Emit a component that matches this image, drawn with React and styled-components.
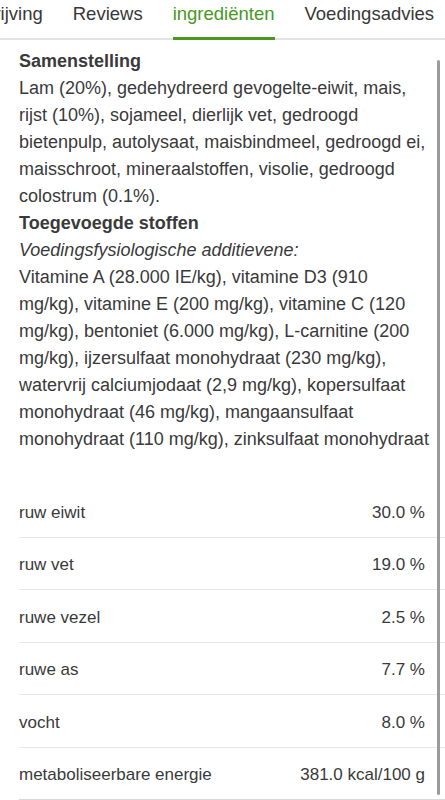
import React from "react";
import styled, { createGlobalStyle } from "styled-components";

const Global = createGlobalStyle`
  html, body { margin: 0; padding: 0; background: #fff; }
  body { font-family: "Liberation Sans", Arial, Helvetica, sans-serif; color: #3a3a3a; -webkit-font-smoothing: antialiased; }
`;

const Page = styled.div`
  position: relative;
  width: 445px;
  height: 800px;
  overflow: hidden;
  background: #fff;
`;

const TabBar = styled.nav`
  height: 40px;
  box-sizing: border-box;
  box-shadow: inset 0 -2px 0 #e3e3e3;
  overflow: hidden;
  white-space: nowrap;
`;

const TabStrip = styled.div`
  display: flex;
  margin-left: -72px;
`;

const Tab = styled.div`
  flex: none;
  margin: 0 15px;
  height: 40px;
  box-sizing: border-box;
  padding-top: 3px;
  font-size: 18.5px;
  line-height: 22px;
  color: ${(p) => (p.$active ? "#45991f" : "#383838")};
  border-bottom: 3px solid ${(p) => (p.$active ? "#45991f" : "transparent")};
`;

const Content = styled.div`
  padding: 8px 14px 0 19px;
  font-size: 18px;
  line-height: 27px;
`;

const Heading = styled.div`
  font-weight: bold;
  color: #3a3a3a;
`;

const Para = styled.div``;

const Italic = styled.div`
  font-style: italic;
`;

const Table = styled.div`
  margin-top: 32px;
  margin-left: 19px;
`;

const Row = styled.div`
  display: flex;
  justify-content: space-between;
  align-items: center;
  height: 52.5px;
  box-sizing: border-box;
  padding: 4px 20px 0 0;
  border-bottom: 1px solid ${(p) => (p.$last ? "#d8d8d8" : "#e6e6e6")};
  font-size: 17px;
  color: #3a3a3a;
`;

const Scrollbar = styled.div`
  position: absolute;
  top: 60px;
  bottom: 5px;
  right: 5px;
  width: 3px;
  border-radius: 2px;
  background: #9b9b9b;
`;

const tabs = ["Beschrijving", "Reviews", "ingrediënten", "Voedingsadvies"];

const rows = [
  ["ruw eiwit", "30.0 %"],
  ["ruw vet", "19.0 %"],
  ["ruwe vezel", "2.5 %"],
  ["ruwe as", "7.7 %"],
  ["vocht", "8.0 %"],
  ["metaboliseerbare energie", "381.0 kcal/100 g"],
];

export default function App() {
  return (
    <Page>
      <Global />
      <TabBar>
        <TabStrip>
          {tabs.map((t) => (
            <Tab key={t} $active={t === "ingrediënten"}>
              {t}
            </Tab>
          ))}
        </TabStrip>
      </TabBar>
      <Content>
        <Heading>Samenstelling</Heading>
        <Para>
          Lam (20%), gedehydreerd gevogelte-eiwit, mais, rijst (10%), sojameel,
          dierlijk vet, gedroogd bietenpulp, autolysaat, maisbindmeel, gedroogd
          ei, maisschroot, mineraalstoffen, visolie, gedroogd colostrum (0.1%).
        </Para>
        <Heading>Toegevoegde stoffen</Heading>
        <Italic>Voedingsfysiologische additievene:</Italic>
        <Para>
          Vitamine A (28.000 IE/kg), vitamine D3 (910 mg/kg), vitamine E (200
          mg/kg), vitamine C (120 mg/kg), bentoniet (6.000 mg/kg), L-carnitine
          (200 mg/kg), ijzersulfaat monohydraat (230 mg/kg), watervrij
          calciumjodaat (2,9 mg/kg), kopersulfaat monohydraat (46 mg/kg),
          mangaansulfaat monohydraat (110 mg/kg), zinksulfaat monohydraat
        </Para>
      </Content>
      <Table>
        {rows.map(([k, v], i) => (
          <Row key={k} $last={i === rows.length - 1}>
            <span>{k}</span>
            <span>{v}</span>
          </Row>
        ))}
      </Table>
      <Scrollbar />
    </Page>
  );
}
